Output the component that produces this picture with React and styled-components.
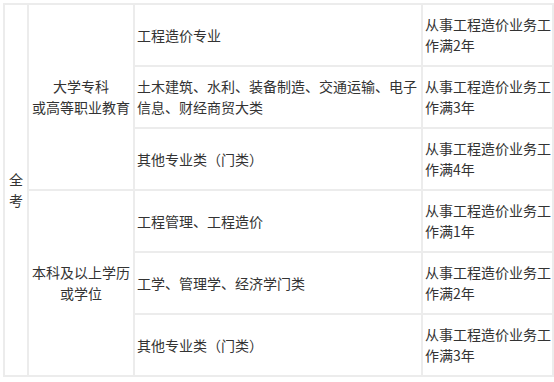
import React from "react";
import styled, { createGlobalStyle } from "styled-components";

const Global = createGlobalStyle`
  html, body { margin: 0; padding: 0; background: #fff; }
  body { font-family: "Noto Sans CJK SC", "Microsoft YaHei", sans-serif; }
`;

const Wrap = styled.div`
  padding: 3px 0 0 3px;
`;

const Table = styled.table`
  width: 549px;
  border-collapse: collapse;
  table-layout: fixed;
  border-top: 2px solid #3ba1e6;
  font-size: 14px;
  line-height: 21px;
  color: #333;
`;

const Cell = styled.td`
  border: 2px solid #ececec;
  height: 60px;
  padding: ${(p) => (p.$center ? "0 2px" : "0 0 0 2px")};
  text-align: ${(p) => (p.$center ? "center" : "left")};
  vertical-align: middle;
  word-break: break-all;
`;

const Col = styled.col`
  width: ${(p) => p.$w}px;
`;

const data = [
  {
    group: "大学专科\n或高等职业教育",
    rows: [
      ["工程造价专业", "从事工程造价业务工作满2年"],
      ["土木建筑、水利、装备制造、交通运输、电子信息、财经商贸大类", "从事工程造价业务工作满3年"],
      ["其他专业类（门类）", "从事工程造价业务工作满4年"],
    ],
  },
  {
    group: "本科及以上学历\n或学位",
    rows: [
      ["工程管理、工程造价", "从事工程造价业务工作满1年"],
      ["工学、管理学、经济学门类", "从事工程造价业务工作满2年"],
      ["其他专业类（门类）", "从事工程造价业务工作满3年"],
    ],
  },
];

const Lines = ({ text }) =>
  text.split("\n").map((t, i) => (
    <React.Fragment key={i}>
      {i > 0 && <br />}
      {t}
    </React.Fragment>
  ));

export default function App() {
  return (
    <Wrap>
      <Global />
      <Table>
        <colgroup>
          <Col $w={24} />
          <Col $w={106} />
          <Col $w={288} />
          <Col $w={131} />
        </colgroup>
        <tbody>
          {data.map((g, gi) =>
            g.rows.map((r, ri) => (
              <tr key={`${gi}-${ri}`}>
                {gi === 0 && ri === 0 && (
                  <Cell $center rowSpan={6}>
                    全<br />考
                  </Cell>
                )}
                {ri === 0 && (
                  <Cell $center rowSpan={3}>
                    <Lines text={g.group} />
                  </Cell>
                )}
                <Cell>{r[0]}</Cell>
                <Cell>{r[1]}</Cell>
              </tr>
            ))
          )}
        </tbody>
      </Table>
    </Wrap>
  );
}
